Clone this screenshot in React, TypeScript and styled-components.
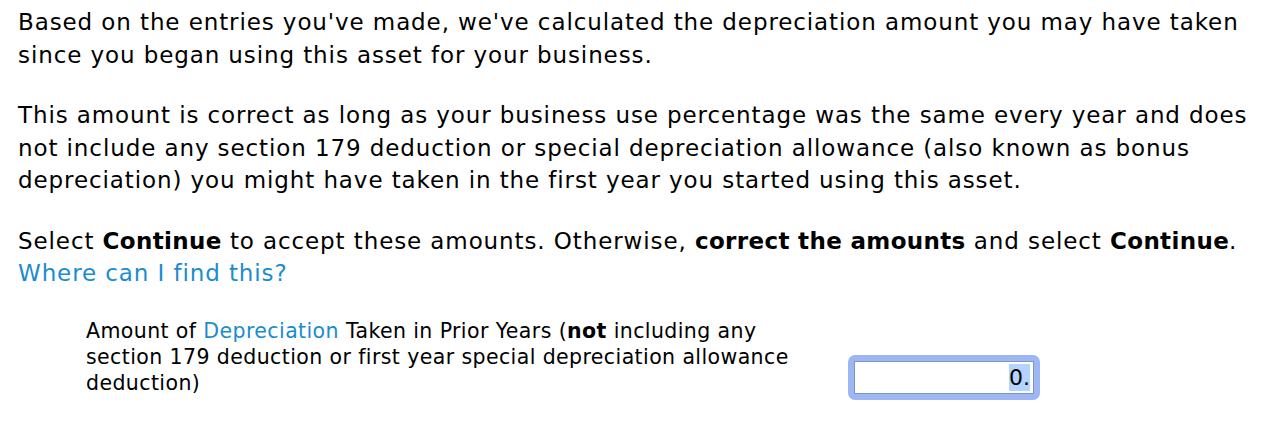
import styled, {createGlobalStyle} from "styled-components";

const GlobalStyle = createGlobalStyle`
  body {
    margin: 0;
    background: #ffffff;
    font-family: "DejaVu Sans", "Liberation Sans", sans-serif;
    color: #000000;
  }
`;

const Page = styled.div`
  padding: 6px 18px 0 18px;
  width: 1278px;
  box-sizing: border-box;
`;

const Paragraph = styled.p`
  margin: 0 0 28px 0;
  font-size: 23px;
  letter-spacing: 0.9px;
  line-height: 32.5px;
  white-space: nowrap;
`;

const Strong = styled.b`
  letter-spacing: 0.35px;
`;

const Link = styled.span`
  color: #1a8cd0;
`;

const FieldRow = styled.div`
  display: flex;
  align-items: flex-start;
  padding-left: 68px;
  margin-top: 2px;
`;

const FieldLabel = styled.div`
  width: 762px;
  font-size: 20.5px;
  letter-spacing: 0.4px;
  line-height: 26px;
  white-space: nowrap;
`;

const InputRing = styled.div`
  margin-top: 37px;
  border: 6px solid #9db7f4;
  border-radius: 7px;
`;

const Input = styled.div`
  width: 175px;
  height: 31px;
  border: 1px solid #7f95c8;
  background: #ffffff;
  display: flex;
  align-items: center;
  justify-content: flex-end;
  padding-right: 3px;
  box-sizing: content-box;
  font-size: 22px;
`;

const Selected = styled.span`
  background: #b4d4fe;
  padding: 1px 0;
`;

export default function App() {
	return (
		<Page>
			<GlobalStyle />
			<Paragraph>
				Based on the entries you've made, we've calculated the depreciation amount you may have taken<br />
				since you began using this asset for your business.
			</Paragraph>
			<Paragraph>
				This amount is correct as long as your business use percentage was the same every year and does<br />
				not include any section 179 deduction or special depreciation allowance (also known as bonus<br />
				depreciation) you might have taken in the first year you started using this asset.
			</Paragraph>
			<Paragraph>
				Select <Strong>Continue</Strong> to accept these amounts. Otherwise, <Strong>correct the amounts</Strong> and select <Strong>Continue</Strong>.<br />
				<Link>Where can I find this?</Link>
			</Paragraph>
			<FieldRow>
				<FieldLabel>
					Amount of <Link>Depreciation</Link> Taken in Prior Years (<b>not</b> including any<br />
					section 179 deduction or first year special depreciation allowance<br />
					deduction)
				</FieldLabel>
				<InputRing>
					<Input><Selected>0.</Selected></Input>
				</InputRing>
			</FieldRow>
		</Page>
	);
}
